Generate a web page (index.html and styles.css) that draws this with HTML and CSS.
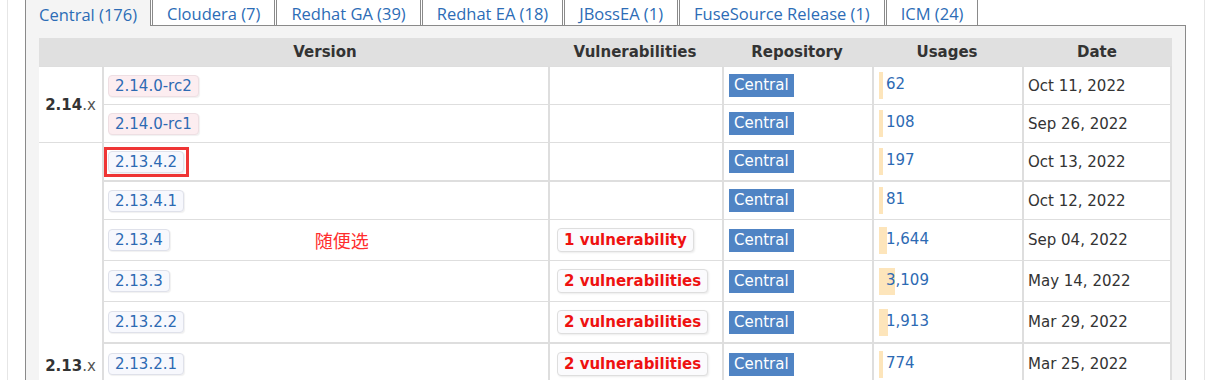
FILE: index.html
```html
<!DOCTYPE html>
<html lang="en">
<head>
<meta charset="utf-8">
<title>Versions</title>
<link rel="stylesheet" href="styles.css">
</head>
<body>
<div class="page">
  <ul class="tabs">
    <li class="tab active"><a>Central (176)</a></li>
    <li class="tab"><a>Cloudera (7)</a></li>
    <li class="tab"><a>Redhat GA (39)</a></li>
    <li class="tab"><a>Redhat EA (18)</a></li>
    <li class="tab"><a>JBossEA (1)</a></li>
    <li class="tab"><a>FuseSource Release (1)</a></li>
    <li class="tab"><a>ICM (24)</a></li>
  </ul>
  <div class="panel">
    <table class="grid">
      <colgroup>
        <col class="c-group"><col class="c-ver"><col class="c-vuln"><col class="c-repo"><col class="c-use"><col class="c-date">
      </colgroup>
      <thead>
        <tr><th></th><th>Version</th><th>Vulnerabilities</th><th>Repository</th><th>Usages</th><th>Date</th></tr>
      </thead>
      <tbody>
        <tr>
          <td class="group" rowspan="2"><b>2.14</b>.x</td>
          <td class="ver"><a class="vbadge rc">2.14.0-rc2</a></td>
          <td class="vuln"></td>
          <td class="repo"><span class="repo-badge">Central</span></td>
          <td class="use"><a class="usage" style="background-size:4px 100%">62</a></td>
          <td class="date">Oct 11, 2022</td>
        </tr>
        <tr>
          <td class="ver"><a class="vbadge rc">2.14.0-rc1</a></td>
          <td class="vuln"></td>
          <td class="repo"><span class="repo-badge">Central</span></td>
          <td class="use"><a class="usage" style="background-size:4px 100%">108</a></td>
          <td class="date">Sep 26, 2022</td>
        </tr>
        <tr>
          <td class="group" rowspan="11"><b>2.13</b>.x</td>
          <td class="ver"><span class="mark"><a class="vbadge">2.13.4.2</a></span></td>
          <td class="vuln"></td>
          <td class="repo"><span class="repo-badge">Central</span></td>
          <td class="use"><a class="usage" style="background-size:4px 100%">197</a></td>
          <td class="date">Oct 13, 2022</td>
        </tr>
        <tr class="sep">
          <td class="ver"><a class="vbadge">2.13.4.1</a></td>
          <td class="vuln"></td>
          <td class="repo"><span class="repo-badge">Central</span></td>
          <td class="use"><a class="usage" style="background-size:4px 100%">81</a></td>
          <td class="date">Oct 12, 2022</td>
        </tr>
        <tr>
          <td class="ver"><a class="vbadge">2.13.4</a><span class="note">随便选</span></td>
          <td class="vuln"><a class="vuln-badge">1 vulnerability</a></td>
          <td class="repo"><span class="repo-badge">Central</span></td>
          <td class="use"><a class="usage" style="background-size:8px 100%">1,644</a></td>
          <td class="date">Sep 04, 2022</td>
        </tr>
        <tr>
          <td class="ver"><a class="vbadge">2.13.3</a></td>
          <td class="vuln"><a class="vuln-badge">2 vulnerabilities</a></td>
          <td class="repo"><span class="repo-badge">Central</span></td>
          <td class="use"><a class="usage" style="background-size:16px 100%">3,109</a></td>
          <td class="date">May 14, 2022</td>
        </tr>
        <tr>
          <td class="ver"><a class="vbadge">2.13.2.2</a></td>
          <td class="vuln"><a class="vuln-badge">2 vulnerabilities</a></td>
          <td class="repo"><span class="repo-badge">Central</span></td>
          <td class="use"><a class="usage" style="background-size:9px 100%">1,913</a></td>
          <td class="date">Mar 29, 2022</td>
        </tr>
        <tr class="sep">
          <td class="ver"><a class="vbadge">2.13.2.1</a></td>
          <td class="vuln"><a class="vuln-badge">2 vulnerabilities</a></td>
          <td class="repo"><span class="repo-badge">Central</span></td>
          <td class="use"><a class="usage" style="background-size:4px 100%">774</a></td>
          <td class="date">Mar 25, 2022</td>
        </tr>
        <tr>
          <td class="ver"><a class="vbadge">2.13.2</a></td>
          <td class="vuln"><a class="vuln-badge">2 vulnerabilities</a></td>
          <td class="repo"><span class="repo-badge">Central</span></td>
          <td class="use"><a class="usage" style="background-size:6px 100%">1,208</a></td>
          <td class="date">Mar 06, 2022</td>
        </tr>
        <tr>
          <td class="ver"><a class="vbadge">2.13.1</a></td>
          <td class="vuln"><a class="vuln-badge">2 vulnerabilities</a></td>
          <td class="repo"><span class="repo-badge">Central</span></td>
          <td class="use"><a class="usage" style="background-size:10px 100%">2,012</a></td>
          <td class="date">Dec 19, 2021</td>
        </tr>
        <tr>
          <td class="ver"><a class="vbadge">2.13.0</a></td>
          <td class="vuln"><a class="vuln-badge">2 vulnerabilities</a></td>
          <td class="repo"><span class="repo-badge">Central</span></td>
          <td class="use"><a class="usage" style="background-size:9px 100%">1,790</a></td>
          <td class="date">Sep 30, 2021</td>
        </tr>
        <tr>
          <td class="ver"><a class="vbadge rc">2.13.0-rc2</a></td>
          <td class="vuln"><a class="vuln-badge">2 vulnerabilities</a></td>
          <td class="repo"><span class="repo-badge">Central</span></td>
          <td class="use"><a class="usage" style="background-size:4px 100%">31</a></td>
          <td class="date">Aug 27, 2021</td>
        </tr>
        <tr>
          <td class="ver"><a class="vbadge rc">2.13.0-rc1</a></td>
          <td class="vuln"><a class="vuln-badge">2 vulnerabilities</a></td>
          <td class="repo"><span class="repo-badge">Central</span></td>
          <td class="use"><a class="usage" style="background-size:4px 100%">29</a></td>
          <td class="date">Jul 15, 2021</td>
        </tr>
      </tbody>
    </table>
  </div>
</div>
</body>
</html>
```

FILE: styles.css
```css
html, body {
  margin: 0;
  padding: 0;
  overflow: hidden;
  background: #ffffff;
}

.page {
  margin: 0 10px 0 7px;
  padding: 0 18px 0 17px;
  border-left: 1px solid #e6e6e6;
  border-right: 1px solid #e6e6e6;
  min-height: 100vh;
}

.tabs {
  display: flex;
  list-style: none;
  margin: -9px 0 0;
  padding: 0;
  font-family: "Open Sans", "Noto Sans", sans-serif;
  font-size: 16.5px;
}

.tab {
  height: 33px;
  display: flex;
  align-items: flex-end;
  padding: 0 14px 0 14px;
  margin-right: 1px;
  border: 1px solid #8a8a8a;
  border-bottom: none;
  background: #ffffff;
}

.tab a {
  display: block;
  line-height: 22px;
  color: #2c6cb6;
}

.tab.active {
  position: relative;
  height: 34px;
  margin-bottom: -1px;
  padding: 0 13px 0 13px;
  background: #f4f4f4;
}

.panel {
  border: 1px solid #8a8a8a;
  background: #f4f4f4;
  padding: 12px 13px 0;
}

.grid {
  width: 1133px;
  table-layout: fixed;
  border-collapse: separate;
  border-spacing: 0;
  background: #ffffff;
  font-family: "DejaVu Sans", Verdana, sans-serif;
  font-size: 15px;
  color: #333333;
}

.c-group { width: 63px; }
.c-ver { width: 446px; }
.c-vuln { width: 174px; }
.c-repo { width: 150px; }
.c-use { width: 150px; }
.c-date { width: 150px; }

.grid th {
  height: 28px;
  padding: 0;
  background: #e0e0e0;
  font-weight: bold;
  color: #333333;
  text-align: center;
  vertical-align: middle;
}

.grid td {
  box-sizing: border-box;
  padding: 5px 5px;
  border-top: 1px solid #dedede;
  border-left: 2px solid #dedede;
  vertical-align: middle;
}

.grid td.group {
  border-left: none;
  text-align: center;
  padding: 0;
  color: #555555;
}

.group b {
  color: #333333;
}

.grid td.date {
  border-right: 2px solid #dedede;
  padding-left: 4px;
}

.grid tr.sep td {
  border-top-width: 2px;
}

.grid td.ver {
  padding-left: 4px;
}

.grid td.vuln {
  padding-left: 7px;
}

.vbadge {
  display: inline-block;
  height: 22px;
  box-sizing: border-box;
  line-height: 20px;
  padding: 0 6px;
  border: 1px solid #dfe1ea;
  border-radius: 4px;
  background: #f7f8fd;
  box-shadow: 1px 1px 1px rgba(0, 0, 0, 0.06);
  color: #2d6ab3;
  vertical-align: middle;
}

.vbadge.rc {
  background: #fcedf0;
  border-color: #eedfe3;
}

.mark {
  display: inline-block;
  margin: -4px;
  padding: 1px 2px 1px 1px;
  border: 3px solid #ef3535;
  vertical-align: middle;
  line-height: 0;
}

.note {
  margin-left: 145px;
  font-family: "Noto Sans CJK SC", sans-serif;
  font-size: 18px;
  color: #ff2d2d;
  vertical-align: middle;
}

.vuln-badge {
  display: block;
  width: fit-content;
  height: 24px;
  box-sizing: border-box;
  line-height: 22px;
  margin: 3px 0;
  padding: 0 6px;
  border: 1px solid #dedede;
  border-radius: 4px;
  background: #fbfbfd;
  box-shadow: 1px 1px 2px rgba(0, 0, 0, 0.08);
  color: #ee1111;
  font-weight: bold;
}

.repo-badge {
  display: inline-block;
  height: 23px;
  line-height: 23px;
  padding: 0 5px;
  background: #5084c4;
  color: #ffffff;
  vertical-align: middle;
}

.usage {
  display: block;
  height: 27px;
  line-height: 25px;
  padding-left: 7px;
  color: #2d6ab3;
  background-image: linear-gradient(#fde5bb, #fde5bb);
  background-repeat: no-repeat;
  background-position: left top;
}
```
